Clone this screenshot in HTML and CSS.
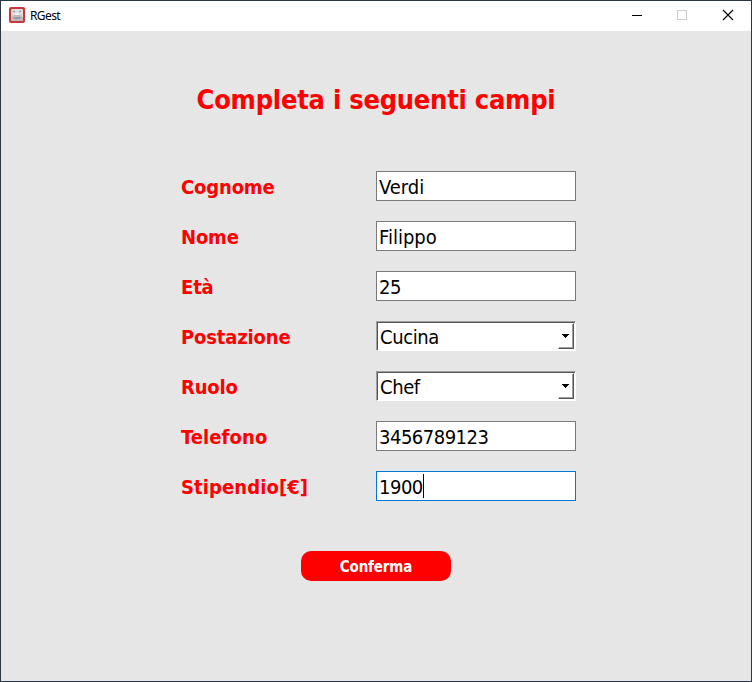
FILE: index.html
```html
<!DOCTYPE html>
<html lang="it">
<head>
<meta charset="utf-8">
<title>RGest</title>
<link rel="stylesheet" href="styles.css">
</head>
<body>
<div class="window">
  <header class="titlebar">
    <svg class="app-icon" width="16" height="16" viewBox="0 0 16 16">
      <rect width="16" height="16" rx="2" fill="#c9353d"/>
      <rect x="2" y="2" width="12" height="12" rx="1" fill="#dedede"/>
      <path d="M2 11 4 8h8l2 3v2l-1 1H3l-1-1z" fill="#bdbdbd"/>
      <path d="M4 4l2 1M12 4l-2 1" stroke="#858585" fill="none"/>
      <path d="M5.500 6.500h5L9.500 8h-3z" fill="#f8f8f8"/>
      <path d="M4.500 11h7" stroke="#777"/>
    </svg>
    <span class="app-name">RGest</span>
    <svg class="controls" width="138" height="30" viewBox="0 0 138 30" fill="none" shape-rendering="crispEdges">
      <path d="M19 14.500h10" stroke="#000"/>
      <rect x="64.500" y="9.500" width="9" height="9" stroke="#ccc"/>
      <path d="M110 9l10 10M120 9l-10 10" stroke="#000" stroke-width="1.100" shape-rendering="auto"/>
    </svg>
  </header>
  <main class="content">
    <h1>Completa i seguenti campi</h1>
    <form class="form">
      <label>Cognome</label><div class="field name">Verdi</div>
      <label>Nome</label><div class="field name">Filippo</div>
      <label>Età</label><div class="field">25</div>
      <label>Postazione</label>
      <div class="combo"><span>Cucina</span><i class="drop"><svg width="7" height="4" viewBox="0 0 7 4" shape-rendering="crispEdges"><path d="M0 0h7v1H6v1H5v1H4v1H3V3H2V2H1V1H0z"/></svg></i></div>
      <label>Ruolo</label>
      <div class="combo"><span>Chef</span><i class="drop"><svg width="7" height="4" viewBox="0 0 7 4" shape-rendering="crispEdges"><path d="M0 0h7v1H6v1H5v1H4v1H3V3H2V2H1V1H0z"/></svg></i></div>
      <label class="phone">Telefono</label><div class="field">3456789123</div>
      <label class="salary">Stipendio[€]</label><div class="field focused">1900<i class="caret"></i></div>
    </form>
    <button class="confirm" type="button">Conferma</button>
  </main>
</div>
</body>
</html>
```
FILE: styles.css
```css
* { box-sizing: border-box; }
body { margin: 0; font-family: "DejaVu Sans Condensed", "DejaVu Sans", sans-serif; font-stretch: condensed; }
.window { width: 752px; height: 682px; border: 1px solid #2b3744; background: #e6e6e6; display: flex; flex-direction: column; }
.titlebar { height: 30px; background: #fff; display: flex; align-items: center; padding-left: 8px; }
.app-icon { margin-top: -2px; }
.app-name { margin-left: 5px; font: 12px/30px "Noto Sans", sans-serif; letter-spacing: -0.6px; }
.controls { margin-left: auto; }
.content { flex: 1; display: flex; flex-direction: column; align-items: center; padding-top: 49px; }
h1 { margin: 0; color: #f00; font-size: 27px; line-height: 40px; font-weight: bold; letter-spacing: -0.24px; white-space: nowrap; }
.form { margin: 51px 0 0 5px; display: grid; grid-template-columns: 195px 200px; grid-auto-rows: 30px; row-gap: 20px; font-size: 20px; line-height: 30px; }
label { padding-top: 1px; color: #f00; font-weight: bold; letter-spacing: -0.15px; white-space: nowrap; }
.phone, .salary { letter-spacing: 0.1px; }
.field { display: flex; align-items: center; background: #fff; border: 1px solid #7a7a7a; padding: 2px 0 0 2px; line-height: 28px; letter-spacing: -0.5px; }
.name { letter-spacing: 0; }
.focused { border-color: #0078d7; }
.caret { width: 1px; height: 24px; margin-top: -2px; background: #000; }
.combo { display: flex; justify-content: space-between; background: #fff; border: 1px solid; border-color: #a0a0a0 #fff #fff #a0a0a0; box-shadow: inset 1px 1px #555; padding: 1px 1px 1px 3px; letter-spacing: -0.4px; line-height: 28px; }
.drop { width: 16px; height: 26px; display: flex; align-items: center; justify-content: center; padding-right: 2px; border: 1px solid; border-color: #fff #555 #555 #fff; box-shadow: inset -1px -1px #a0a0a0; }
.confirm { margin-top: 50px; width: 150px; height: 30px; border: 0; border-radius: 10px; padding: 2px 0 0; background: #f00; color: #fff; font: bold 15px/28px "DejaVu Sans Condensed", "DejaVu Sans", sans-serif; font-stretch: condensed; letter-spacing: -0.15px; }
```
